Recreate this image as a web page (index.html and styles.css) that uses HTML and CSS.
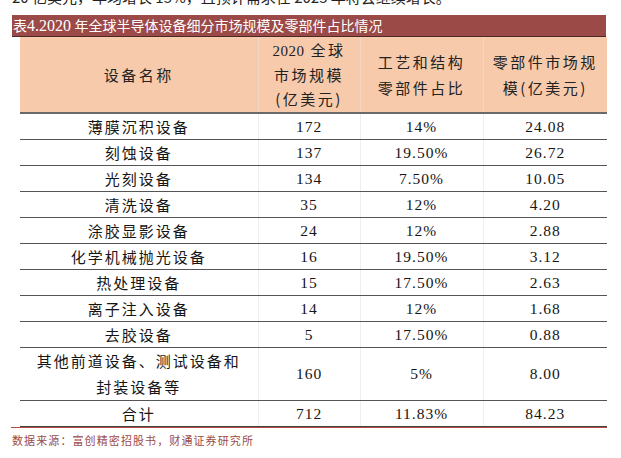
FILE: index.html
```html
<!DOCTYPE html>
<html lang="zh-CN">
<head>
<meta charset="utf-8">
<link rel="stylesheet" href="styles.css">
</head>
<body>
<div class="page">
  <div class="clip"><span class="prev">20 亿美元，年均增长 15%，且预计需求在 2025 年将会继续增长。</span></div>
  <div class="title">表<span class="tnum">4.2020</span> 年全球半导体设备细分市场规模及零部件占比情况</div>
  <table class="tbl">
    <colgroup>
      <col class="c1"><col class="c2"><col class="c3"><col class="c4">
    </colgroup>
    <thead>
      <tr>
        <th>设备名称</th>
        <th class="h3l"><span class="num">2020</span> 全球<br>市场规模<br>(亿美元)</th>
        <th class="h2l">工艺和结构<br>零部件占比</th>
        <th class="h2l">零部件市场规<br>模(亿美元)</th>
      </tr>
    </thead>
    <tbody>
      <tr><td>薄膜沉积设备</td><td class="num">172</td><td class="num">14%</td><td class="num">24.08</td></tr>
      <tr><td>刻蚀设备</td><td class="num">137</td><td class="num">19.50%</td><td class="num">26.72</td></tr>
      <tr><td>光刻设备</td><td class="num">134</td><td class="num">7.50%</td><td class="num">10.05</td></tr>
      <tr><td>清洗设备</td><td class="num">35</td><td class="num">12%</td><td class="num">4.20</td></tr>
      <tr><td>涂胶显影设备</td><td class="num">24</td><td class="num">12%</td><td class="num">2.88</td></tr>
      <tr><td>化学机械抛光设备</td><td class="num">16</td><td class="num">19.50%</td><td class="num">3.12</td></tr>
      <tr><td>热处理设备</td><td class="num">15</td><td class="num">17.50%</td><td class="num">2.63</td></tr>
      <tr><td>离子注入设备</td><td class="num">14</td><td class="num">12%</td><td class="num">1.68</td></tr>
      <tr><td>去胶设备</td><td class="num">5</td><td class="num">17.50%</td><td class="num">0.88</td></tr>
      <tr class="dbl"><td>其他前道设备、测试设备和<br>封装设备等</td><td class="num">160</td><td class="num">5%</td><td class="num">8.00</td></tr>
      <tr class="total"><td>合计</td><td class="num">712</td><td class="num">11.83%</td><td class="num">84.23</td></tr>
    </tbody>
  </table>
  <div class="rule"></div>
  <div class="source">数据来源：富创精密招股书，财通证券研究所</div>
</div>
</body>
</html>
```
FILE: styles.css
```css
html, body {
  margin: 0;
  padding: 0;
  background: #ffffff;
}
.page {
  padding: 0 14px 0 12px;
  font-family: "Noto Sans CJK SC", sans-serif;
  color: #1a1a1a;
}
.clip {
  height: 5px;
  overflow: hidden;
  display: flex;
  align-items: flex-end;
}
.prev {
  font-size: 15px;
  line-height: 17px;
  white-space: nowrap;
  color: #222;
}
.title {
  margin-top: 10px;
  width: 594px;
  height: 22px;
  box-sizing: border-box;
  background: #9b4a47;
  border-bottom: 1px solid #4a2a28;
  color: #ffffff;
  font-family: "Liberation Serif", "Noto Sans CJK SC", serif;
  font-size: 14px;
  line-height: 21px;
  letter-spacing: 0;
  padding-left: 1px;
  white-space: nowrap;
}
.tnum {
  font-size: 16px;
}
.tbl {
  margin-left: 8px;
  width: 587px;
  border-collapse: collapse;
  table-layout: fixed;
  font-size: 15px;
  letter-spacing: 2px;
}
.c1 { width: 238px; }
.c2 { width: 102px; }
.c3 { width: 123px; }
.c4 { width: 124px; }
.tbl th {
  background: #f7caac;
  font-weight: 400;
  height: 75px;
  padding: 0;
  color: #222;
  border-left: 1px solid #f0d8c8;
  border-bottom: 2px solid #6a6a6a;
  line-height: 24px;
  letter-spacing: 2.5px;
}
.tbl th.h2l {
  line-height: 26px;
}
.tbl th:first-child { border-left: none; }
.tbl td {
  text-align: center;
  padding: 0;
  height: 25px;
  line-height: 24px;
  border-bottom: 1px solid #555;
  border-left: 1px solid #eeeeee;
  color: #151515;
}
.tbl td:first-child { border-left: none; }
.tbl tr.dbl td {
  height: 51px;
  line-height: 26px;
}
.tbl tr.total td {
  border-bottom: 1.5px solid #444;
}
.num {
  font-family: "Liberation Serif", "Noto Sans CJK SC", serif;
  letter-spacing: 1px;
  font-size: 15.5px;
}
.tbl th .num {
  font-size: 15px;
  letter-spacing: 0.5px;
}
.rule {
  width: 596px;
  margin-left: -1px;
  height: 1px;
  background: #b34a45;
}
.source {
  margin-top: 5px;
  font-size: 11px;
  line-height: 14px;
  letter-spacing: 1.1px;
  color: #9b4a47;
}
```
